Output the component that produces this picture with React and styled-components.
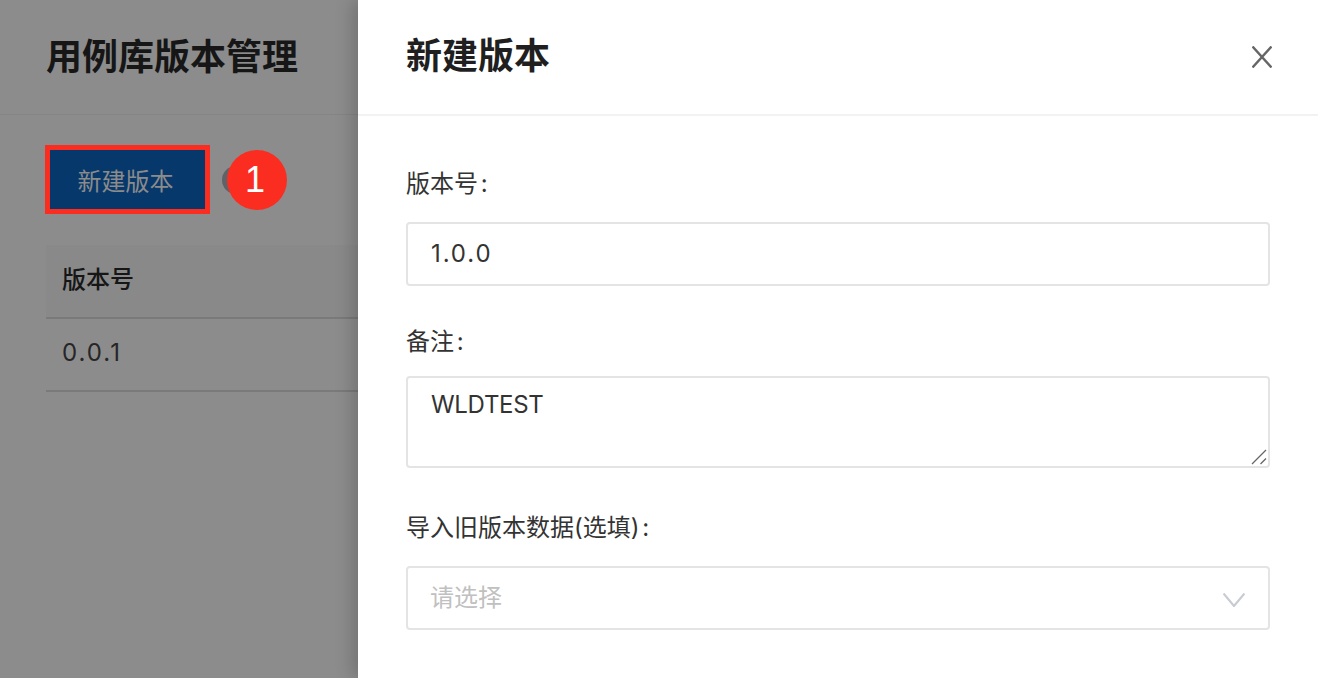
import React from "react";
import styled, { createGlobalStyle } from "styled-components";

const GlobalStyle = createGlobalStyle`
  html, body {
    margin: 0;
    padding: 0;
    height: 100%;
    overflow: hidden;
    font-family: "Inter", "Noto Sans CJK SC", sans-serif;
  }
  * { box-sizing: border-box; }
`;

const Page = styled.div`
  display: flex;
  width: 1318px;
  height: 678px;
  overflow: hidden;
  background: #8c8c8c;
`;

const Behind = styled.section`
  width: 358px;
  flex: none;
`;

const BehindHeader = styled.header`
  height: 115px;
  padding: 0 46px;
  display: flex;
  align-items: center;
  border-bottom: 1px solid #848484;
`;

const PageTitle = styled.h1`
  margin: 0 0 7px;
  font-size: 36px;
  font-weight: 600;
  color: #161616;
`;

const Toolbar = styled.div`
  padding: 30px 0 31px 45px;
  display: flex;
  align-items: center;
`;

const Highlight = styled.div`
  border: 5px solid #fb2d20;
`;

const NewButton = styled.button`
  display: block;
  width: 155px;
  height: 59px;
  padding: 0 4px 0 0;
  border: 0;
  background: #07386b;
  color: #8b8b8b;
  font: 24px "Inter", "Noto Sans CJK SC", sans-serif;
`;

const Marker = styled.div`
  position: relative;
  margin-left: 12px;
  width: 65px;
  height: 60px;
`;

const HiddenDot = styled.span`
  position: absolute;
  left: 0;
  top: 16px;
  width: 28px;
  height: 28px;
  border-radius: 50%;
  background: #5f6368;
`;

const Badge = styled.span`
  position: absolute;
  left: 5px;
  top: 0;
  width: 60px;
  height: 60px;
  padding-right: 4px;
  border-radius: 50%;
  background: #fb2d20;
  color: #fff;
  font: 36px/60px "Liberation Sans", sans-serif;
  text-align: center;
`;

const VersionTable = styled.div`
  margin-left: 46px;
`;

const HeadCell = styled.div`
  height: 74px;
  padding: 0 16px 7px;
  display: flex;
  align-items: center;
  background: #898989;
  border-bottom: 2px solid #7a7a7a;
  color: #161616;
  font-size: 24px;
  font-weight: 500;
`;

const BodyCell = styled.div`
  height: 73px;
  padding: 0 16px 4px;
  display: flex;
  align-items: center;
  border-bottom: 2px solid #7a7a7a;
  color: #262626;
  font-size: 24px;
  letter-spacing: 2px;
`;

const Drawer = styled.aside`
  flex: 1;
  background: #fff;
  box-shadow: -6px 0 16px rgba(0, 0, 0, 0.18);
  position: relative;
`;

const DrawerHeader = styled.header`
  height: 116px;
  padding: 0 46px 0 48px;
  display: flex;
  align-items: center;
  justify-content: space-between;
  border-bottom: 2px solid #f2f2f2;
`;

const DrawerTitle = styled.h2`
  margin: 0 0 8px;
  font-size: 36px;
  font-weight: 600;
  color: #1f1f1f;
`;

const CloseButton = styled.button`
  width: 20px;
  height: 22px;
  padding: 0;
  border: 0;
  background: none;
  display: block;
`;

const Form = styled.form`
  padding: 50px 48px 0;
`;

const Label = styled.label`
  display: block;
  height: 36px;
  line-height: 36px;
  margin-bottom: ${(p) => p.$gap}px;
  font-size: 24px;
  word-spacing: -4px;
  color: #333;
`;

const TextInput = styled.div`
  height: 64px;
  padding: 0 23px 2px;
  margin-bottom: 38px;
  display: flex;
  align-items: center;
  border: 2px solid #e4e4e4;
  border-radius: 4px;
  font-size: 24px;
  letter-spacing: 1.9px;
  color: #333;
`;

const TextArea = styled.div`
  position: relative;
  height: 92px;
  padding: 12px 23px;
  margin-bottom: 42px;
  border: 2px solid #e4e4e4;
  border-radius: 4px;
  font-size: 24px;
  line-height: 30px;
  letter-spacing: -0.3px;
  color: #333;
`;

const ResizeGrip = styled.svg`
  position: absolute;
  right: 1px;
  bottom: 1px;
  width: 16px;
  height: 16px;
`;

const Select = styled.div`
  height: 64px;
  padding: 0 23px 6px 22px;
  display: flex;
  align-items: center;
  justify-content: space-between;
  border: 2px solid #e4e4e4;
  border-radius: 4px;
  font-size: 24px;
  color: #c0c0c0;
`;

const SelectArrow = styled.svg`
  margin-top: 10px;
`;

export default function App() {
  return (
    <Page>
      <GlobalStyle />
      <Behind>
        <BehindHeader>
          <PageTitle>用例库版本管理</PageTitle>
        </BehindHeader>
        <Toolbar>
          <Highlight>
            <NewButton type="button">新建版本</NewButton>
          </Highlight>
          <Marker>
            <HiddenDot />
            <Badge>1</Badge>
          </Marker>
        </Toolbar>
        <VersionTable>
          <HeadCell>版本号</HeadCell>
          <BodyCell>0.0.1</BodyCell>
        </VersionTable>
      </Behind>
      <Drawer>
        <DrawerHeader>
          <DrawerTitle>新建版本</DrawerTitle>
          <CloseButton type="button" aria-label="关闭">
            <svg width="20" height="22" viewBox="0 0 20 22" fill="none" stroke="#666" strokeWidth="2.4">
              <path d="M0.5 0.5 L19.5 21.5 M19.5 0.5 L0.5 21.5" />
            </svg>
          </CloseButton>
        </DrawerHeader>
        <Form>
          <Label $gap={20}>版本号 :</Label>
          <TextInput>1.0.0</TextInput>
          <Label $gap={16}>备注 :</Label>
          <TextArea>
            WLDTEST
            <ResizeGrip viewBox="0 0 16 16" fill="none" stroke="#666" strokeWidth="1.3">
              <path d="M1 15 L15 1 M9.5 15 L15 9.5" />
            </ResizeGrip>
          </TextArea>
          <Label $gap={20}>导入旧版本数据(选填) :</Label>
          <Select>
            请选择
            <SelectArrow width="22" height="14" viewBox="0 0 22 14" fill="none" stroke="#c8ccd2" strokeWidth="2.2">
              <path d="M0.5 0.5 L11 13 L21.5 0.5" />
            </SelectArrow>
          </Select>
        </Form>
      </Drawer>
    </Page>
  );
}
